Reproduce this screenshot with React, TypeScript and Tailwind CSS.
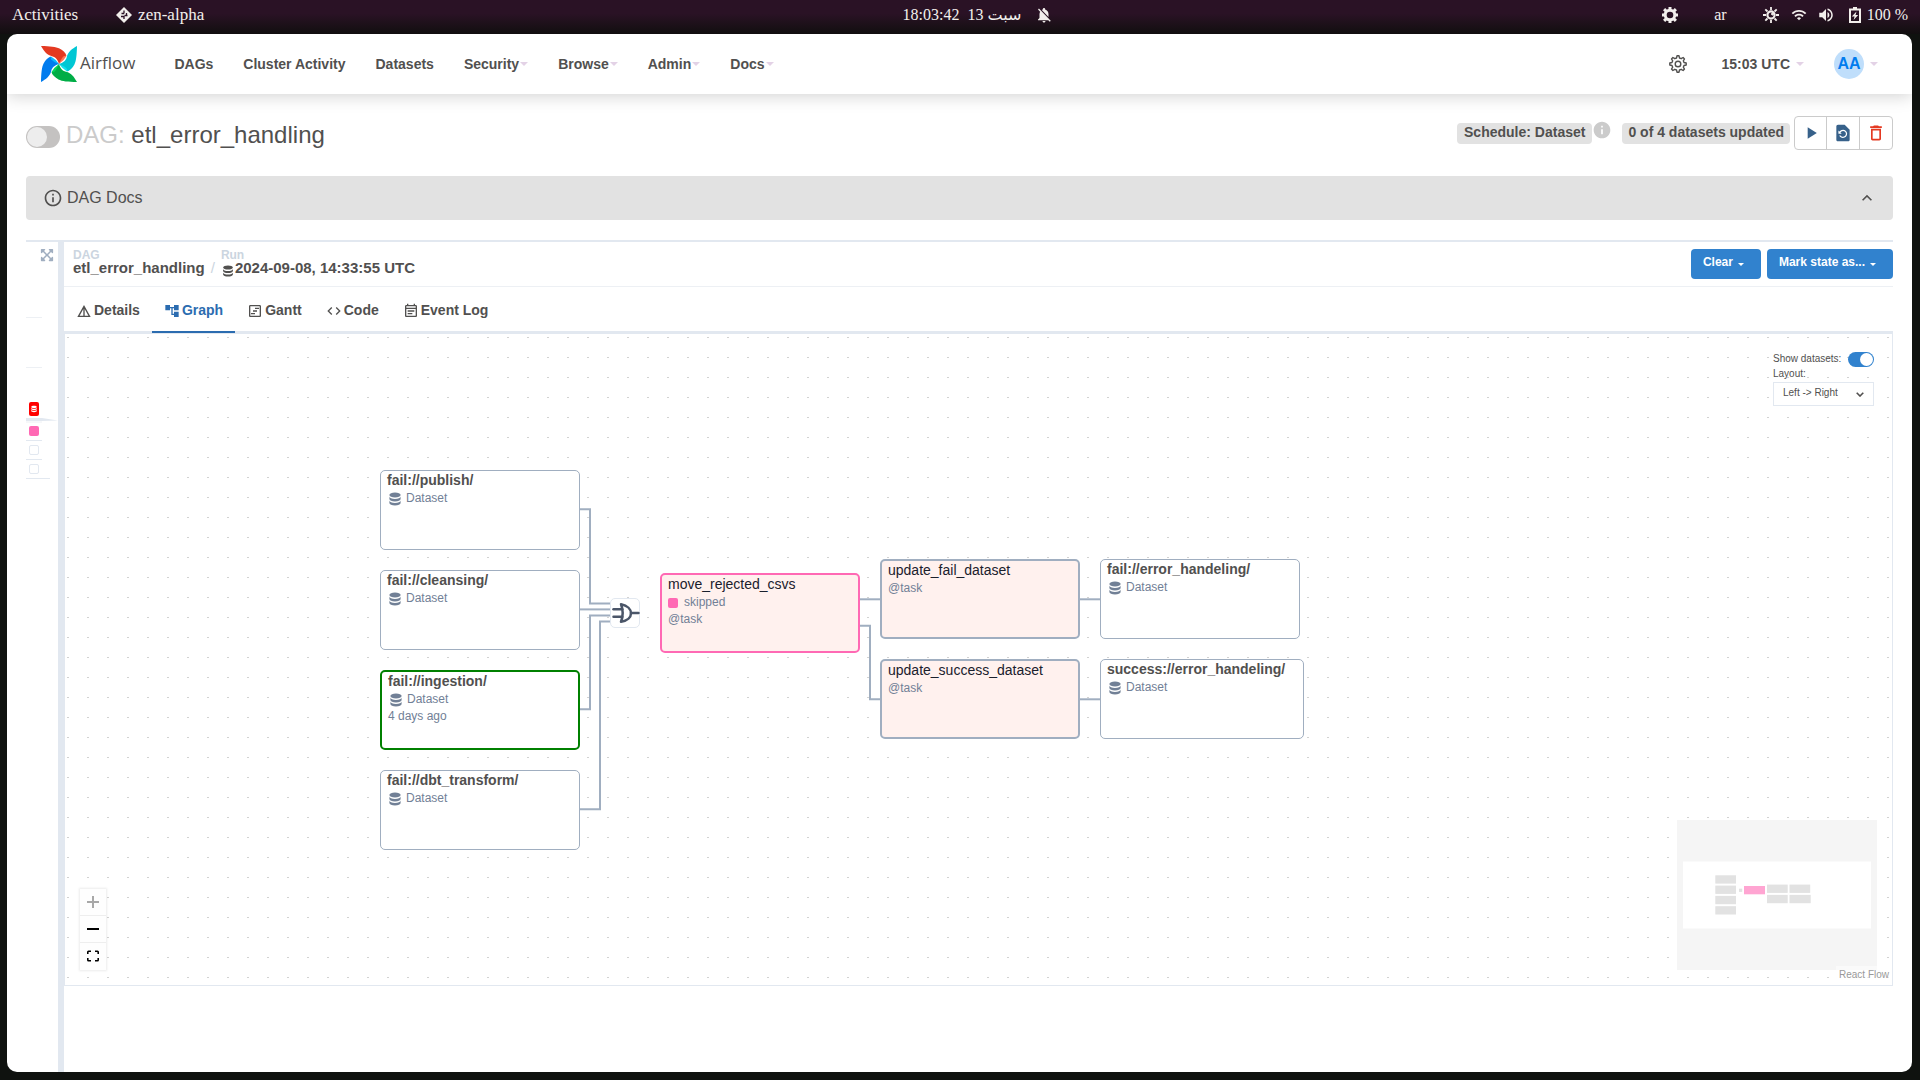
import { useState } from "react";
import type { ReactNode } from "react";
import { FaExpandArrowsAlt } from "react-icons/fa";
import { HiDatabase } from "react-icons/hi";
import {
  MdAccountTree,
  MdCode,
  MdDeleteOutline,
  MdDetails,
  MdInfo,
  MdInfoOutline,
  MdKeyboardArrowUp,
  MdNotificationsOff,
  MdOutlineEventNote,
  MdOutlineViewTimeline,
  MdPlayArrow,
  MdRestorePage,
  MdVolumeUp,
  MdWifi,
} from "react-icons/md";
import { TbLogicOr } from "react-icons/tb";

type GraphNode = {
  label: string;
  kind: "dataset" | "task";
  place: string;
  border: string;
  state?: string;
  updated?: string;
};

const navItems = [
  { label: "DAGs", menu: false },
  { label: "Cluster Activity", menu: false },
  { label: "Datasets", menu: false },
  { label: "Security", menu: true },
  { label: "Browse", menu: true },
  { label: "Admin", menu: true },
  { label: "Docs", menu: true },
];

const tabs = [
  { label: "Details", Icon: MdDetails },
  { label: "Graph", Icon: MdAccountTree },
  { label: "Gantt", Icon: MdOutlineViewTimeline },
  { label: "Code", Icon: MdCode },
  { label: "Event Log", Icon: MdOutlineEventNote },
];

const nodes: GraphNode[] = [
  { label: "fail://publish/", kind: "dataset", place: "left-[315px] top-[136px] w-[200px]", border: "border border-[#a0aec0]" },
  { label: "fail://cleansing/", kind: "dataset", place: "left-[315px] top-[236px] w-[200px]", border: "border border-[#a0aec0]" },
  { label: "fail://ingestion/", kind: "dataset", place: "left-[315px] top-[336px] w-[200px]", border: "border-2 border-[#008000]", updated: "4 days ago" },
  { label: "fail://dbt_transform/", kind: "dataset", place: "left-[315px] top-[436px] w-[200px]", border: "border border-[#a0aec0]" },
  { label: "move_rejected_csvs", kind: "task", place: "left-[595px] top-[239px] w-[200px]", border: "border-2 border-[#ff69b4]", state: "skipped" },
  { label: "update_fail_dataset", kind: "task", place: "left-[815px] top-[225px] w-[200px]", border: "border-2 border-[#a0aec0]" },
  { label: "update_success_dataset", kind: "task", place: "left-[815px] top-[325px] w-[200px]", border: "border-2 border-[#a0aec0]" },
  { label: "fail://error_handeling/", kind: "dataset", place: "left-[1035px] top-[225px] w-[200px]", border: "border border-[#a0aec0]" },
  { label: "success://error_handeling/", kind: "dataset", place: "left-[1035px] top-[325px] w-[204px]", border: "border border-[#a0aec0]" },
];

const edges = [
  "M515 175.3H525V269.5H545",
  "M515 275.4H545",
  "M515 375.3H525V281.4H545",
  "M515 475.3H535V287.4H545",
  "M795 265.3H815",
  "M795 291.7H805V365.3H815",
  "M1015 265.3H1035",
  "M1015 365.3H1035",
];

function Caret({ className = "" }: { className?: string }) {
  return (
    <svg viewBox="0 0 8 4" className={`w-2 h-1 ${className}`} fill="currentColor">
      <path d="M0 0h8L4 4z" />
    </svg>
  );
}

function SystemBar() {
  return (
    <div className="h-[34px] pl-3 pr-3 pb-1 grid grid-cols-[1fr_auto_1fr] items-center bg-linear-to-b from-[#2a1225] from-40% to-[#110e0f] text-[#f2efec] font-['Liberation_Serif','DejaVu_Sans',serif] text-base">
      <div className="flex items-center text-[17px]">
        <span>Activities</span>
        <svg viewBox="0 0 16 16" className="w-4 h-4 ml-[38px] mr-1.5">
          <path d="M8 0l8 8-8 8-8-8z" fill="#f2efec" />
          <path
            d="M8 3.5v3M8 6.5H5.5M5 9.5h3v2.5M10.5 6v3M8.5 8.5h3"
            fill="none"
            stroke="#2a1225"
            strokeWidth="1.3"
          />
        </svg>
        <span>zen-alpha</span>
      </div>
      <div className="flex items-center pl-9" dir="ltr">
        <span>18:03:42</span>
        <span className="ml-2">13</span>
        <span className="ml-1" lang="ar">سبت</span>
        <MdNotificationsOff className="w-[18px] h-[18px] ml-3.5" />
      </div>
      <div className="flex items-center justify-end">
        <svg viewBox="0 0 16 16" className="w-4 h-4" fill="none" stroke="currentColor">
          <circle cx="8" cy="8" r="4.800" strokeWidth="3" />
          <path d="M8 0v2.500M8 13.500V16M0 8h2.500M13.500 8H16M2.100 2.100l2 2M11.900 11.900l2 2M2.100 13.900l2-2M11.900 4.100l2-2" strokeWidth="3" />
        </svg>
        <span className="ml-9">ar</span>
        <svg viewBox="0 0 16 16" className="w-4 h-4 ml-9" fill="none" stroke="currentColor">
          <circle cx="8" cy="8" r="3.6" strokeWidth="2.2" />
          <path d="M8 0v3M8 13v3M0 8h3M13 8h3M2.3 2.3l2.2 2.2M11.5 11.5l2.2 2.2M2.3 13.7l2.2-2.2M11.5 4.5l2.2-2.2" strokeWidth="1.8" />
          <circle cx="9.5" cy="7" r="1" fill="currentColor" />
        </svg>
        <MdWifi className="w-4 h-4 ml-3" />
        <MdVolumeUp className="w-[18px] h-[18px] ml-2.5" />
        <svg viewBox="0 0 12 16" className="w-3 h-4 ml-3.5" fill="none">
          <path d="M4 0h4v2H4z" fill="currentColor" />
          <path d="M1 2.500h10v12.500H1z" stroke="currentColor" strokeWidth="2" />
          <path d="M7.500 4.500L2.800 9.500H5.600L4.600 13L9.200 8H6.500z" fill="currentColor" />
        </svg>
        <span className="ml-1.5">100 %</span>
      </div>
    </div>
  );
}

function PinwheelLogo() {
  const blades = [
    { dark: "#e43921", light: "#ff7557", turn: "rotate(0 18 18)" },
    { dark: "#00c7d4", light: "#11e1ee", turn: "rotate(90 18 18)" },
    { dark: "#00ad46", light: "#04d659", turn: "rotate(180 18 18)" },
    { dark: "#017cee", light: "#0cb6ff", turn: "rotate(270 18 18)" },
  ];
  return (
    <svg viewBox="0 0 36 36" className="w-9 h-9">
      {blades.map((b) => (
        <path key={b.light} transform={b.turn} d="M19 6C22.500 6 25 8 25.500 10Q23 14.500 18 18z" fill={b.light} />
      ))}
      {blades.map((b) => (
        <path
          key={b.dark}
          transform={b.turn}
          d="M0 0C9 .2 15 .8 18.500 2.600C22 4.500 25 7 25.300 10C23 8.500 20.500 12 18 18C16.800 14 15 11.200 11 10.200C5.500 9 3 5 0 0z"
          fill={b.dark}
        />
      ))}
    </svg>
  );
}

function GearIcon() {
  return (
    <svg viewBox="0 0 18 18" className="w-[18px] h-[18px]" fill="none" stroke="#51504f" strokeWidth="1.4" strokeLinejoin="round">
      <path d="M7.500 3L8 .8h2L10.500 3L12.200 3.700L14.100 2.500L15.500 3.900L14.300 5.800L15 7.500L17.200 8v2L15 10.500L14.300 12.200L15.500 14.100L14.100 15.500L12.200 14.300L10.500 15L10 17.200H8L7.500 15L5.800 14.300L3.900 15.500L2.500 14.100L3.700 12.200L3 10.500L.8 10V8L3 7.500L3.700 5.800L2.500 3.900L3.900 2.500L5.800 3.700z" />
      <circle cx="9" cy="9" r="2.800" />
    </svg>
  );
}

function NavBar() {
  return (
    <nav className="h-[60px] pl-[34px] pr-[34px] pb-px flex items-center shadow-[0_2px_16px_rgba(0,0,0,0.18)] text-sm font-bold">
      <a href="#home" className="flex items-center mr-[39px] font-['Open_Sans','Noto_Sans',sans-serif] font-normal text-[17px] gap-[3px]">
        <PinwheelLogo />
        Airflow
      </a>
      <div className="flex items-center gap-[30px]">
        {navItems.map((item) => (
          <a key={item.label} href="#nav" className="flex items-center gap-px">
            {item.label}
            {item.menu && <Caret className="text-[#e3d2e6]" />}
          </a>
        ))}
      </div>
      <div className="ml-auto flex items-center">
        <button aria-label="Settings" className="mr-[35px]">
          <GearIcon />
        </button>
        <button className="flex items-center gap-1.5 mr-[30px]">
          15:03 UTC
          <Caret className="text-[#e3d2e6]" />
        </button>
        <button className="flex items-center gap-1.5">
          <span className="w-[30px] h-[30px] rounded-full bg-[#bfdefb] text-[#017cee] text-base flex items-center justify-center">
            AA
          </span>
          <Caret className="text-[#e3d2e6]" />
        </button>
      </div>
    </nav>
  );
}

function DagHeader() {
  return (
    <div className="flex items-center justify-between mt-[22px] mb-[26px]">
      <div className="flex items-center mt-1">
        <input
          type="checkbox"
          aria-label="Pause DAG"
          className="appearance-none w-[34px] h-[22px] p-px mt-1 mr-1.5 flex rounded-full bg-[#c4c2c1] before:w-5 before:h-5 before:rounded-full before:bg-[#ededed]"
        />
        <h1 className="text-2xl leading-7">
          <span className="text-[#cbcbcb]">DAG:</span> etl_error_handling
        </h1>
      </div>
      <div className="flex items-center">
        <span className="h-[21px] px-[7px] leading-[18px] rounded-sm bg-[#e2e2e2] text-sm font-bold">Schedule: Dataset</span>
        <MdInfo className="w-5 h-5 mb-1.5 text-[#cbcbcb]" />
        <span className="h-[21px] px-1.5 ml-2.5 leading-[18px] rounded-sm bg-[#e2e2e2] text-sm font-bold">
          0 of 4 datasets updated
        </span>
        <div className="flex h-[34px] ml-1 border border-[#cbcbcb] rounded-sm divide-x divide-[#cbcbcb]">
          <button aria-label="Trigger DAG" className="w-8 flex items-center justify-center text-[#37618a]">
            <MdPlayArrow className="w-5 h-5" />
          </button>
          <button aria-label="Reparse DAG" className="w-[33px] flex items-center justify-center text-[#37618a]">
            <MdRestorePage className="w-5 h-5" />
          </button>
          <button aria-label="Delete DAG" className="w-8 flex items-center justify-center text-[#e43921]">
            <MdDeleteOutline className="w-5 h-5" />
          </button>
        </div>
      </div>
    </div>
  );
}

// collapsed grid view: one run column and its task instances
function GridStrip() {
  return (
    <div className="w-8 shrink-0 flex flex-col items-start">
      <button aria-label="Expand grid" className="self-end mt-1.5 mr-1 mb-0.5 text-[#a0aec0]">
        <FaExpandArrowsAlt className="w-3.5 h-3.5" />
      </button>
      <div className="w-4 mt-[53px] border-t border-[#edf0f4]" />
      <div className="w-4 mt-[49px] border-t border-[#edf0f4]" />
      <button
        aria-label="Failed run"
        className="w-2.5 h-3.5 ml-[3px] mt-[34px] rounded-xs bg-[#ff0000] text-white flex items-center justify-center"
      >
        <HiDatabase className="w-2 h-2" />
      </button>
      <svg viewBox="0 0 32 5" className="w-8 h-[5px] mt-0.5">
        <path d="M0 0h16l16 2.500L16 3H0z" fill="#e2e8f0" />
        <path d="M0 4h16" stroke="#edf0f4" />
      </svg>
      <button aria-label="move_rejected_csvs" className="w-2.5 h-2.5 ml-[3px] mt-[3px] rounded-xs bg-[#ff69b4]" />
      <div className="w-4 mt-1 border-t border-[#e2e8f0]" />
      <button aria-label="update_fail_dataset" className="w-2.5 h-2.5 ml-[3px] mt-1 rounded-xs border border-[#e2e8f0]" />
      <div className="w-4 mt-1 border-t border-[#e2e8f0]" />
      <button aria-label="update_success_dataset" className="w-2.5 h-2.5 ml-[3px] mt-1 rounded-xs border border-[#e2e8f0]" />
      <div className="w-6 mt-1 border-t border-[#e2e8f0]" />
    </div>
  );
}

function RunHeader() {
  return (
    <div className="h-[45px] pl-[9px] flex items-start border-b border-[#edf0f4] font-bold">
      <div className="flex items-end pt-[7px] text-[15px] leading-[14px]">
        <div>
          <div className="text-xs leading-3 text-[#cbd5e0]">DAG</div>
          <a href="#dag" className="block h-4">etl_error_handling</a>
        </div>
        <span className="px-1.5 h-4 font-normal text-[#cbd5e0]">/</span>
        <div>
          <div className="text-xs leading-3 text-[#cbd5e0]">Run</div>
          <a href="#run" className="flex h-4">
            <HiDatabase className="w-3.5 h-3.5 mt-[3px]" />
            2024-09-08, 14:33:55 UTC
          </a>
        </div>
      </div>
      <div className="ml-auto mt-[7px] flex gap-1.5">
        <MenuButton>Clear</MenuButton>
        <MenuButton>Mark state as...</MenuButton>
      </div>
    </div>
  );
}

function MenuButton({ children }: { children: ReactNode }) {
  return (
    <button className="h-[30px] pl-3 pr-4 pb-1 flex items-center gap-1 rounded-sm bg-[#3182ce] text-white text-xs font-bold">
      {children}
      <Caret className="mt-1 w-1.5 h-[3px]" />
    </button>
  );
}

function Tabs({ active, onSelect }: { active: string; onSelect: (label: string) => void }) {
  return (
    <div className="h-[47px] flex border-b-3 border-[#e2e8f0] text-sm font-bold">
      {tabs.map(({ label, Icon }) => (
        <button
          key={label}
          onClick={() => onSelect(label)}
          className={
            active === label
              ? "h-[46px] px-3 pt-0.5 flex items-center gap-0.5 border-b-2 border-[#2b6cb0] text-[#2b6cb0]"
              : "h-[46px] px-3 pt-0.5 flex items-center gap-0.5 border-b-2 border-transparent"
          }
        >
          <Icon className="w-4 h-4 mt-0.5" />
          {label}
        </button>
      ))}
    </div>
  );
}

function Node({ node }: { node: GraphNode }) {
  const isTask = node.kind === "task";
  return (
    <div
      className={`absolute h-20 rounded-[5px] ${node.place} ${node.border} ${
        isTask ? "bg-[#fff1ee]" : "bg-white"
      } px-1.5 text-xs leading-4 text-[#718096]`}
    >
      <div
        className={
          isTask
            ? "text-sm leading-[18px] whitespace-nowrap text-[#1a202c]"
            : "text-sm leading-[18px] whitespace-nowrap text-[#51504f] font-bold"
        }
      >
        {node.label}
      </div>
      {node.kind === "dataset" && (
        <div className="h-[18px] flex items-center gap-[3px]">
          <HiDatabase className="w-4 h-4 mt-0.5" />
          Dataset
        </div>
      )}
      {node.state && (
        <div className="h-[17px] flex items-center gap-1.5">
          <span className="w-2.5 h-2.5 mt-0.5 rounded-xs bg-[#ff69b4]" />
          {node.state}
        </div>
      )}
      {isTask && <div className="leading-[18px]">@task</div>}
      {node.updated && <div>{node.updated}</div>}
    </div>
  );
}

function MiniMap() {
  return (
    <svg viewBox="0 0 200 150" className="absolute right-[15px] bottom-[15px] w-[200px] h-[150px]">
      <rect width="200" height="150" fill="#f5f5f5" />
      <rect x="6" y="41.500" width="188" height="67" fill="#fff" />
      <g fill="#e2e2e2">
        <rect x="38.300" y="55.300" width="20.700" height="8.300" />
        <rect x="38.300" y="65.600" width="20.700" height="8.300" />
        <rect x="38.300" y="75.900" width="20.700" height="8.300" />
        <rect x="38.300" y="86.200" width="20.700" height="8.300" />
        <rect x="62" y="68.700" width="3.200" height="3.200" />
        <rect x="90" y="64.600" width="20.700" height="8.300" />
        <rect x="90" y="74.900" width="20.700" height="8.300" />
        <rect x="112.500" y="64.600" width="20.700" height="8.300" />
        <rect x="112.500" y="74.900" width="21.200" height="8.300" />
      </g>
      <rect x="67" y="66" width="21" height="8.300" fill="#ffa5d2" />
    </svg>
  );
}

function Controls() {
  return (
    <div className="absolute left-[15px] bottom-[15px] flex flex-col bg-[#fefefe] shadow-[0_0_2px_1px_rgba(0,0,0,0.08)] divide-y divide-[#eee]">
      <button aria-label="Zoom in" className="w-[26px] h-[27px] flex items-center justify-center">
        <svg viewBox="0 0 12 12" className="w-3 h-3 text-[#a8a8a8]" stroke="currentColor" strokeWidth="2">
          <path d="M6 0v12M0 6h12" />
        </svg>
      </button>
      <button aria-label="Zoom out" className="w-[26px] h-[27px] flex items-center justify-center">
        <svg viewBox="0 0 12 12" className="w-3 h-3" stroke="#000" strokeWidth="2">
          <path d="M0 6h12" />
        </svg>
      </button>
      <button aria-label="Fit view" className="w-[26px] h-[27px] pb-px flex items-center justify-center">
        <svg viewBox="0 0 12 12" className="w-3 h-3" fill="none" stroke="#000" strokeWidth="1.600">
          <path d="M.8 4V2Q.8 1.300 1.500 1.300H4M8 1.300h2.500Q11.200 1.300 11.200 2v2M11.200 8v2Q11.200 10.700 10.500 10.700H8M4 10.700H1.500Q.8 10.700.8 10V8" />
        </svg>
      </button>
    </div>
  );
}

function Graph() {
  const [showDatasets, setShowDatasets] = useState(true);

  return (
    <div className="relative flex-1 min-h-[600px] mb-[86px] border border-t-0 border-[#e2e8f0] overflow-hidden">
      <svg className="absolute inset-0 w-full h-full">
        <pattern id="dots" width="20" height="20" patternUnits="userSpaceOnUse">
          <rect x="2" y="3" width="2" height="1" fill="#d2d2d2" />
        </pattern>
        <rect width="100%" height="100%" fill="url(#dots)" />
        {edges.map((d) => (
          <path key={d} d={d} fill="none" stroke="#a0aec0" strokeWidth="2" />
        ))}
      </svg>
      {nodes.map((node) => (
        <Node key={node.label} node={node} />
      ))}
      <div className="absolute left-[545px] top-[264px] w-[30px] h-[30px] pl-0.5 flex items-center justify-center rounded-[5px] border border-[#e2e8f0] bg-white text-[#4a5568]">
        <TbLogicOr className="w-[30px] h-[30px] shrink-0" />
      </div>
      <div className="absolute right-[18px] top-[17px] w-[101px] text-[10px] leading-[14px]">
        <label className="flex items-center justify-between whitespace-nowrap">
          Show datasets:
          <input
            type="checkbox"
            checked={showDatasets}
            onChange={() => setShowDatasets(!showDatasets)}
            className="appearance-none w-[26px] h-[15px] p-px mt-px flex rounded-full bg-[#cbd5e0] before:w-[13px] before:h-[13px] before:rounded-full before:bg-white checked:bg-[#3182ce] checked:justify-end"
          />
        </label>
        <label htmlFor="layout" className="block pb-px">
          Layout:
        </label>
        <div className="relative">
          <select
            id="layout"
            className="block appearance-none w-full h-6 pl-[9px] pb-0.5 border border-[#e2e8f0] bg-white text-[10px]"
          >
            <option>Left -&gt; Right</option>
          </select>
          <svg viewBox="0 0 8 5" className="absolute right-2.5 top-2.5 w-2 h-[5px]" fill="none" stroke="#51504f" strokeWidth="1.600">
            <path d="M.7.700L4 4L7.300.700" />
          </svg>
        </div>
      </div>
      <MiniMap />
      <Controls />
      <a href="#reactflow" className="absolute right-0 bottom-0 px-[3px] pt-0.5 pb-1 text-[10px] leading-[13px] text-[#999] bg-white/50">
        React Flow
      </a>
    </div>
  );
}

export default function App() {
  const [tab, setTab] = useState("Graph");

  return (
    <div className="min-h-screen flex flex-col bg-[#0f120f] font-['Liberation_Sans',Arial,sans-serif] text-[#51504f]">
      <SystemBar />
      <div className="flex-1 flex flex-col ml-[7px] mr-2 mb-2 rounded-[10px] bg-white overflow-hidden">
        <NavBar />
        <main className="flex-1 flex flex-col px-[19px]">
          <DagHeader />
          <button className="h-11 shrink-0 pl-[17px] pr-4 flex items-center gap-1 rounded-sm bg-[#e2e2e2] text-base">
            <MdInfoOutline className="w-5 h-5" />
            DAG Docs
            <MdKeyboardArrowUp className="w-5 h-5 ml-auto" />
          </button>
          <div className="flex-1 flex mt-5 border-t-2 border-[#e2e8f0]">
            <GridStrip />
            <div className="w-1.5 bg-[#e2e8f0]" />
            <div className="flex-1 min-w-0 flex flex-col">
              <RunHeader />
              <Tabs active={tab} onSelect={setTab} />
              <Graph />
            </div>
          </div>
        </main>
      </div>
    </div>
  );
}
